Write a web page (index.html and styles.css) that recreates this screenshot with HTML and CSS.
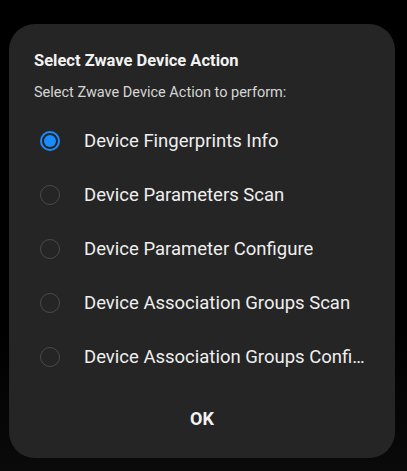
FILE: index.html
```html
<!DOCTYPE html>
<html>
<head>
<meta charset="utf-8">
<link rel="stylesheet" href="styles.css">
</head>
<body>
<div class="screen">
  <div class="dialog">
    <div class="title">Select Zwave Device Action</div>
    <div class="subtitle">Select Zwave Device Action to perform:</div>
    <div class="options">
      <div class="option"><span class="radio checked"></span><span class="label">Device Fingerprints Info</span></div>
      <div class="option"><span class="radio"></span><span class="label">Device Parameters Scan</span></div>
      <div class="option"><span class="radio"></span><span class="label">Device Parameter Configure</span></div>
      <div class="option"><span class="radio"></span><span class="label">Device Association Groups Scan</span></div>
      <div class="option"><span class="radio"></span><span class="label">Device Association Groups Configure</span></div>
    </div>
    <div class="actions"><span class="ok">OK</span></div>
  </div>
</div>
</body>
</html>
```

FILE: styles.css
```css
html, body {
  margin: 0;
  padding: 0;
  background: #000;
}
.screen {
  width: 407px;
  height: 471px;
  background: linear-gradient(#000 0%, #000 70%, #0a0a0a 100%);
  padding: 24px 0 0 9px;
  box-sizing: border-box;
  font-family: Roboto, "Noto Sans", sans-serif;
}
.dialog {
  width: 386px;
  height: 434px;
  background: #252525;
  border-radius: 26px;
  box-sizing: border-box;
  padding: 27px 28px 0 25px;
  display: flex;
  flex-direction: column;
}
.title {
  color: #f2f2f2;
  font-size: 16.5px;
  font-weight: 700;
  line-height: 20px;
}
.subtitle {
  color: #d6d6d6;
  font-size: 14.5px;
  line-height: 20px;
  margin-top: 12px;
}
.options {
  margin-top: 11px;
  display: flex;
  flex-direction: column;
}
.option {
  height: 54px;
  display: flex;
  align-items: center;
  gap: 24px;
  padding-left: 6px;
}
.radio {
  flex: none;
  width: 20px;
  height: 20px;
  border: 1.5px solid #4a4a4a;
  border-radius: 50%;
  box-sizing: border-box;
  display: flex;
  align-items: center;
  justify-content: center;
}
.radio.checked {
  border: 2px solid #1b8cff;
}
.radio.checked::after {
  content: "";
  width: 12px;
  height: 12px;
  border-radius: 50%;
  background: #1b8cff;
}
.label {
  color: #efefef;
  font-size: 18.5px;
  white-space: nowrap;
  overflow: hidden;
  text-overflow: ellipsis;
  min-width: 0;
}
.actions {
  display: flex;
  justify-content: center;
  margin-top: 24px;
  padding-left: 3px;
}
.ok {
  color: #f2f2f2;
  font-size: 18px;
  font-weight: 700;
}
```
